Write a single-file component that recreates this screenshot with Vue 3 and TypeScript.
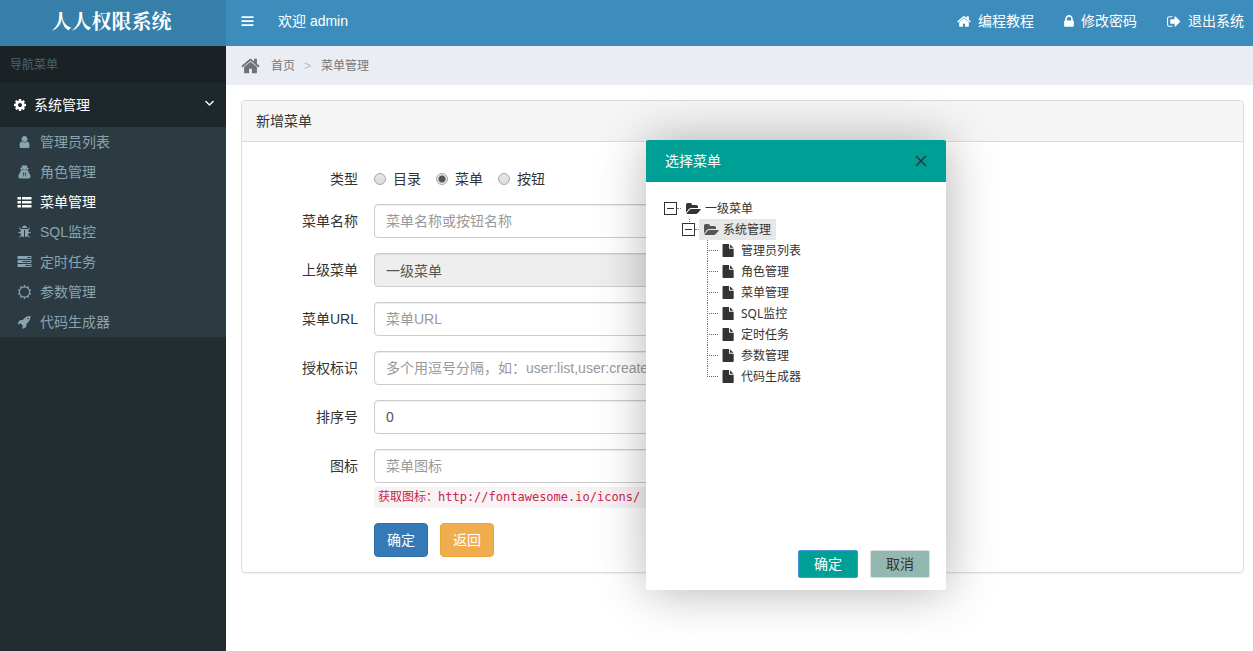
<script setup lang="ts">
import { ref } from 'vue'

interface Glyph {
  box: string
  d: string
}

const glyphs: Record<string, Glyph> = {
  bars: {
    box: '128 128 1536 1536',
    d: 'M128 1312h1536v224H128zM128 800h1536v224H128zM128 288h1536v224H128z',
  },
  home: {
    box: '64 0 1664 1792',
    d: 'M1472 992v480q0 26-19 45t-45 19h-384v-384h-256v384h-384q-26 0-45-19t-19-45v-480q0-1 .5-3t.5-3l575-474 575 474q1 2 1 6zm223-69l-62 74q-8 9-21 11h-3q-13 0-21-7l-692-577-692 577q-12 8-24 7-13-2-21-11l-62-74q-8-10-7-23.5t11-21.5l719-599q32-26 76-26t76 26l244 204v-195q0-14 9-23t23-9h192q14 0 23 9t9 23v408l219 182q10 8 11 21.5t-7 23.5z',
  },
  lock: {
    box: '320 0 1152 1792',
    d: 'M640 768h512v-192q0-106-75-181t-181-75-181 75-75 181v192zm832 96v576q0 40-28 68t-68 28h-960q-40 0-68-28t-28-68v-576q0-40 28-68t68-28h32v-192q0-184 132-316t316-132 316 132 132 316v192h32q40 0 68 28t28 68z',
  },
  signOut: {
    box: '64 0 1664 1792',
    d: 'M704 1440q0 4 1 20t.5 26.5-3 23.5-10 19.5-20.5 6.5h-320q-119 0-203.5-84.5t-84.5-203.5v-704q0-119 84.5-203.5t203.5-84.5h320q13 0 22.5 9.5t9.5 22.5q0 4 1 20t.5 26.5-3 23.5-10 19.5-20.5 6.5h-320q-66 0-113 47t-47 113v704q0 66 47 113t113 47h312l11.5 1 11.5 3 8 5.5 7 9 2 13.5zm928-544q0 26-19 45l-544 544q-19 19-45 19t-45-19-19-45v-288h-448q-26 0-45-19t-19-45v-384q0-26 19-45t45-19h448v-288q0-26 19-45t45-19 45 19l544 544q19 19 19 45z',
  },
  cog: {
    box: '128 128 1536 1536',
    d: 'M1152 896q0-106-75-181t-181-75-181 75-75 181 75 181 181 75 181-75 75-181zm512-109v222q0 12-8 23t-20 13l-185 28q-19 54-39 91 35 50 107 138 10 12 10 25t-9 23q-27 37-99 108t-94 71q-12 0-26-9l-138-108q-44 23-91 38-16 136-29 186-7 28-36 28h-222q-14 0-24.5-8.5t-11.5-21.5l-28-184q-49-16-90-37l-141 107q-10 9-25 9-14 0-25-11-126-114-165-168-7-10-7-23 0-12 8-23 15-21 51-66.5t54-70.5q-27-50-41-99l-183-27q-13-2-21-12.5t-8-23.5v-222q0-12 8-23t19-13l186-28q14-46 39-92-40-57-107-138-10-12-10-24 0-10 9-23 26-36 98.5-107.5t94.5-71.5q13 0 26 10l138 107q44-23 91-38 16-136 29-186 7-28 36-28h222q14 0 24.5 8.5t11.5 21.5l28 184q49 16 90 37l142-107q9-9 24-9 13 0 25 10 129 119 165 170 7 8 7 22 0 12-8 23-15 21-51 66.5t-54 70.5q26 50 41 98l183 28q13 2 21 12.5t8 23.5z',
  },
  angleDown: {
    box: '384 448 1024 1024',
    d: 'M1395 736q0 13-10 23l-466 466q-10 10-23 10t-23-10l-466-466q-10-10-10-23t10-23l70-70q10-10 23-10t23 10l373 373 373-373q10-10 23-10t23 10l70 70q10 10 10 23z',
  },
  user: {
    box: '0 0 1792 1792',
    d: 'M1536 1399q0 109-62.5 187t-150.5 78h-854q-88 0-150.5-78t-62.5-187q0-85 8.5-160.5t31.5-152 58.5-131 94-89 134.5-34.5q131 128 313 128t313-128q76 0 134.5 34.5t94 89 58.5 131 31.5 152 8.5 160.5zm-256-887q0 159-112.5 271.5t-271.5 112.5-271.5-112.5-112.5-271.5 112.5-271.5 271.5-112.5 271.5 112.5 112.5 271.5z',
  },
  secret: {
    box: '100 90 1592 1592',
    d: 'M640 140q60-50 130-20 126 50 252 0 70-30 120 20 60 90 90 260 160 40 160 90 0 40-110 70 10 130-60 230h200l-60 170q220 120 220 440 0 190-180 230H370q-180-40-180-230 0-320 220-440l-50-170h190q-70-100-60-230-100-30-100-70 0-50 160-90 30-170 90-260zM590 610q0 90 110 90 110 0 140-90h80q30 90 140 90 120 0 130-90zM700 900l100 560 60-370-60-110zM1090 900l-100 80-60 110 60 370z',
  },
  list: {
    box: '0 0 1792 1792',
    d: 'M0 1280h448v320H0zM576 1280h1216v320H576zM0 768h448v320H0zM576 768h1216v320H576zM0 256h448v320H0zM576 256h1216v320H576z',
  },
  bug: {
    box: '0 0 1792 1792',
    d: 'M1696 960q0 26-19 45t-45 19h-224q0 171-67 290l208 209q19 19 19 45t-19 45q-18 19-45 19t-45-19l-198-197q-5 5-15 13t-42 28.5-65 36.5-82 29-97 13v-896h-128v896q-51 0-101.5-13.5t-87-33-66-39-43.5-32.5l-15-14-183 207q-20 21-48 21-24 0-43-16-19-18-20.5-44.5t15.5-46.5l202-227q-58-114-58-274h-224q-26 0-45-19t-19-45 19-45 45-19h224v-294l-173-173q-19-19-19-45t19-45 45-19 45 19l173 173h844l173-173q19-19 45-19t45 19 19 45-19 45l-173 173v294h224q26 0 45 19t19 45zm-480-576h-640q0-133 93.5-226.5t226.5-93.5 226.5 93.5 93.5 226.5z',
  },
  tasks: {
    box: '0 0 1792 1792',
    d: 'M1024 1408h640v-128h-640v128zm-384-512h1024v-128h-1024v128zm640-512h384v-128h-384v128zm512 832v256q0 26-19 45t-45 19h-1664q-26 0-45-19t-19-45v-256q0-26 19-45t45-19h1664q26 0 45 19t19 45zm0-512v256q0 26-19 45t-45 19h-1664q-26 0-45-19t-19-45v-256q0-26 19-45t45-19h1664q26 0 45 19t19 45zm0-512v256q0 26-19 45t-45 19h-1664q-26 0-45-19t-19-45v-256q0-26 19-45t45-19h1664q26 0 45 19t19 45z',
  },
  sun: {
    box: '0 0 1792 1792',
    d: 'M1472 896q0-117-45.5-223.5t-123-184-184-123-223.5-45.5-223.5 45.5-184 123-123 184-45.5 223.5 45.5 223.5 123 184 184 123 223.5 45.5 223.5-45.5 184-123 123-184 45.5-223.5zm276 277q-4 15-20 20l-292 96v306q0 16-13 26-15 10-29 4l-292-94-180 248q-10 13-26 13t-26-13l-180-248-292 94q-14 6-29-4-13-10-13-26v-306l-292-96q-16-5-20-20-5-17 4-29l180-248-180-248q-9-13-4-29 4-15 20-20l292-96v-306q0-16 13-26 15-10 29-4l292 94 180-248q9-12 26-12t26 12l180 248 292-94q14-6 29 4 13 10 13 26v306l292 96q16 5 20 20 5 16-4 29l-180 248 180 248q9 12 4 29z',
  },
  rocket: {
    box: '0 0 1792 1792',
    d: 'M1440 448q0-40-28-68t-68-28-68 28-28 68 28 68 68 28 68-28 28-68zm224-288q0 249-75.5 430.5t-253.5 360.5q-81 80-195 176l-20 379q-2 16-16 26l-384 224q-7 4-16 4-12 0-23-9l-64-64q-13-14-8-32l85-276-281-281-276 85q-3 1-9 1-14 0-23-9l-64-64q-17-19-5-39l224-384q10-14 26-16l379-20q96-114 176-195 188-187 358-258t431-71q14 0 24 9.5t10 22.5z',
  },
  folder: {
    box: '0 0 1920 1792',
    d: 'M1879 952q0 31-31 66l-336 396q-43 51-120.5 86.5t-143.5 35.5h-1088q-34 0-60.5-13t-26.5-43q0-31 31-66l336-396q43-51 120.5-86.5t143.5-35.5h1088q34 0 60.5 13t26.5 43zm-343-344v160h-832q-94 0-197 47.5t-164 119.5l-337 396-5 6q0-4-.5-12.5t-.5-12.5v-960q0-92 66-158t158-66h320q92 0 158 66t66 158v32h544q92 0 158 66t66 158z',
  },
  file: {
    box: '0 0 1920 1792',
    d: 'M1024 512v-472q22 14 36 28l408 408q14 14 28 36h-472zm-128 32q0 40 28 68t68 28h544v1056q0 40-28 68t-68 28h-1344q-40 0-68-28t-28-68v-1600q0-40 28-68t68-28h800v544z',
  },
}

const links = [
  { icon: 'home', text: '编程教程' },
  { icon: 'lock', text: '修改密码' },
  { icon: 'signOut', text: '退出系统' },
]

const menu = [
  { icon: 'user', text: '管理员列表' },
  { icon: 'secret', text: '角色管理' },
  { icon: 'list', text: '菜单管理' },
  { icon: 'bug', text: 'SQL监控' },
  { icon: 'tasks', text: '定时任务' },
  { icon: 'sun', text: '参数管理' },
  { icon: 'rocket', text: '代码生成器' },
]
const active = ref('菜单管理')

const types = ['目录', '菜单', '按钮']
const type = ref('菜单')

const fields = ref([
  { id: 'name', label: '菜单名称', value: '', hint: '菜单名称或按钮名称', readonly: false },
  { id: 'parent', label: '上级菜单', value: '一级菜单', hint: '', readonly: true },
  { id: 'url', label: '菜单URL', value: '', hint: '菜单URL', readonly: false },
  { id: 'perms', label: '授权标识', value: '', hint: '多个用逗号分隔，如：user:list,user:create', readonly: false },
  { id: 'order', label: '排序号', value: '0', hint: '', readonly: false },
  { id: 'icon', label: '图标', value: '', hint: '菜单图标', readonly: false },
])

const open = ref(true)
</script>

<template>
  <div class="app">
    <header class="top">
      <a class="logo" href="#">人人权限系统</a>
      <nav class="bar">
        <button class="burger" type="button" aria-label="切换导航">
          <svg class="icon-bars" :viewBox="glyphs.bars.box"><path :d="glyphs.bars.d" /></svg>
        </button>
        <span class="welcome">欢迎 admin</span>
        <div class="links">
          <a v-for="l in links" :key="l.text" href="#" class="link">
            <svg class="icon-link" :class="{ narrow: l.icon === 'lock' }" :viewBox="glyphs[l.icon].box">
              <path :d="glyphs[l.icon].d" />
            </svg>
            <span>{{ l.text }}</span>
          </a>
        </div>
      </nav>
    </header>

    <div class="main">
      <aside class="side">
        <div class="side-title">导航菜单</div>
        <button class="group" type="button">
          <svg class="icon-cog" :viewBox="glyphs.cog.box"><path :d="glyphs.cog.d" /></svg>
          <span class="group-text">系统管理</span>
          <svg class="icon-angle" :viewBox="glyphs.angleDown.box"><path :d="glyphs.angleDown.d" /></svg>
        </button>
        <ul class="sub">
          <li v-for="m in menu" :key="m.text">
            <a href="#" class="sub-item" :class="{ active: m.text === active }" @click.prevent="active = m.text">
              <svg class="icon-menu" :viewBox="glyphs[m.icon].box">
                <path :d="glyphs[m.icon].d" fill-rule="evenodd" />
              </svg>
              <span>{{ m.text }}</span>
            </a>
          </li>
        </ul>
      </aside>

      <section class="content">
        <nav class="crumbs">
          <svg class="icon-home" :viewBox="glyphs.home.box"><path :d="glyphs.home.d" /></svg>
          <a href="#" class="crumb">首页</a>
          <span class="sep">&gt;</span>
          <span>菜单管理</span>
        </nav>

        <div class="panel">
          <h1 class="panel-title">新增菜单</h1>
          <form class="form" @submit.prevent>
            <div class="row types" role="radiogroup" aria-labelledby="type-label">
              <span id="type-label" class="label">类型</span>
              <div class="radios">
                <label v-for="t in types" :key="t" class="radio">
                  <input v-model="type" type="radio" name="type" :value="t" />
                  <span>{{ t }}</span>
                </label>
              </div>
            </div>
            <div v-for="f in fields" :key="f.id" class="row">
              <label class="label" :for="f.id">{{ f.label }}</label>
              <input
                :id="f.id"
                v-model="f.value"
                class="field"
                type="text"
                :placeholder="f.hint"
                :readonly="f.readonly"
              />
            </div>
            <code class="hint">获取图标：http://fontawesome.io/icons/</code>
            <div class="actions">
              <button class="btn primary" type="submit">确定</button>
              <button class="btn warning" type="button">返回</button>
            </div>
          </form>
        </div>
      </section>
    </div>

    <div v-if="open" class="modal" role="dialog" aria-labelledby="modal-title">
      <div class="modal-head">
        <span id="modal-title">选择菜单</span>
        <button class="close" type="button" aria-label="关闭" @click="open = false">
          <svg class="icon-close" viewBox="0 0 12 12"><path d="M1 1L11 11M11 1L1 11" /></svg>
        </button>
      </div>
      <ul class="tree">
        <li>
          <div class="node">
            <button class="toggle" type="button" aria-label="折叠一级菜单"></button>
            <span class="stub"></span>
            <span class="node-label">
              <svg class="icon-tree" :viewBox="glyphs.folder.box"><path :d="glyphs.folder.d" /></svg>
              <span>一级菜单</span>
            </span>
          </div>
          <ul class="branch">
            <li>
              <div class="node child">
                <button class="toggle" type="button" aria-label="折叠系统管理"></button>
                <span class="stub"></span>
                <span class="node-label selected">
                  <svg class="icon-tree" :viewBox="glyphs.folder.box"><path :d="glyphs.folder.d" /></svg>
                  <span>系统管理</span>
                </span>
              </div>
              <ul class="branch">
                <li v-for="m in menu" :key="m.text" class="node leaf">
                  <span class="elbow"></span>
                  <span class="node-label">
                    <svg class="icon-tree file" :viewBox="glyphs.file.box"><path :d="glyphs.file.d" /></svg>
                    <span>{{ m.text }}</span>
                  </span>
                </li>
              </ul>
            </li>
          </ul>
        </li>
      </ul>
      <div class="modal-foot">
        <button class="mbtn ok" type="button">确定</button>
        <button class="mbtn cancel" type="button" @click="open = false">取消</button>
      </div>
    </div>
  </div>
</template>

<style>
body {
  margin: 0;
  background: #fff;
}
</style>

<style scoped>
.app,
.app * {
  box-sizing: border-box;
}
.app {
  display: flex;
  flex-direction: column;
  min-height: 100vh;
  font: 14px/20px "Liberation Sans", "Noto Sans CJK SC", sans-serif;
  color: #333;
}
.app button,
.app input {
  font: inherit;
  margin: 0;
}
.app button {
  cursor: pointer;
}
ul {
  list-style: none;
  margin: 0;
  padding: 0;
}
a {
  color: inherit;
  text-decoration: none;
}
svg {
  fill: currentColor;
  flex: none;
  display: block;
}

.top {
  display: flex;
  height: 46px;
  color: #fff;
}
.logo {
  flex: none;
  width: 226px;
  padding-right: 3px;
  background: #367fa9;
  font-family: "Liberation Serif", "Noto Serif CJK SC", "Noto Sans CJK SC", serif;
  font-size: 20px;
  font-weight: 700;
  line-height: 44px;
  text-align: center;
}
.bar {
  flex: 1;
  display: flex;
  align-items: center;
  padding: 0 9px 4px 15px;
  background: #3c8dbc;
}
.burger {
  padding: 0;
  border: 0;
  background: none;
  color: inherit;
}
.icon-bars {
  width: 13px;
  height: 12px;
}
.welcome {
  margin-left: 24px;
}
.links {
  display: flex;
  gap: 30px;
  margin-left: auto;
}
.link {
  display: flex;
  align-items: center;
  gap: 7px;
}
.icon-link {
  width: 14px;
  height: 15px;
}
.icon-link.narrow {
  width: 10px;
}

.main {
  flex: 1;
  display: flex;
}
.side {
  flex: none;
  width: 226px;
  background: #222d32;
}
.side-title {
  height: 37px;
  padding-left: 10px;
  background: #1a2226;
  color: #4b646f;
  font-size: 12px;
  line-height: 38px;
}
.group {
  display: flex;
  align-items: center;
  width: 100%;
  height: 44px;
  padding: 0 12px 0 14px;
  border: 0;
  background: #1e282c;
  color: #fff;
  text-align: left;
}
.group-text {
  flex: 1;
  margin-left: 8px;
}
.icon-cog {
  width: 12px;
  height: 12px;
}
.icon-angle {
  width: 9px;
  height: 9px;
  margin-bottom: 4px;
}
.sub {
  background: #2c3b41;
}
.sub-item {
  display: flex;
  align-items: center;
  gap: 8px;
  height: 30px;
  padding-left: 17px;
  color: #8aa4af;
}
.sub-item.active {
  color: #fff;
}
.icon-menu {
  width: 15px;
  height: 14px;
}

.content {
  flex: 1;
  min-width: 0;
}
.crumbs {
  display: flex;
  align-items: center;
  height: 39px;
  padding: 1px 0 0 15px;
  background: #eaedf3;
  color: #777;
  font-size: 12px;
}
.icon-home {
  width: 19px;
  height: 20px;
  color: #6f7377;
}
.crumb {
  margin-left: 11px;
}
.sep {
  margin: 0 10px 0 9px;
  color: #bbb;
}

.panel {
  margin: 15px 9px 0 15px;
  border: 1px solid #ddd;
  border-radius: 4px;
  box-shadow: 0 1px 1px rgba(0, 0, 0, 0.05);
}
.panel-title {
  margin: 0;
  padding: 10px 14px;
  border-bottom: 1px solid #ddd;
  border-radius: 3px 3px 0 0;
  background: #f5f5f5;
  font-size: 14px;
  font-weight: 400;
}
.form {
  max-width: 700px;
  padding: 20px 15px 15px;
}
.row {
  display: flex;
  align-items: center;
  gap: 16px;
  margin-bottom: 15px;
}
.row.types {
  padding-top: 7px;
}
.label {
  flex: none;
  width: 101px;
  text-align: right;
}
.radios {
  display: flex;
  gap: 15px;
}
.radio {
  display: flex;
  align-items: center;
  gap: 7px;
}
.radio input {
  appearance: none;
  width: 12px;
  height: 12px;
  border: 1px solid #a8a8a8;
  border-radius: 50%;
  background: linear-gradient(#e6e6e6, #dcdcdc);
}
.radio input:checked {
  background: radial-gradient(circle, #555 0 3px, #e2e2e2 4px);
}
.field {
  flex: 1;
  min-width: 0;
  height: 34px;
  padding: 6px 11px;
  border: 1px solid #ccc;
  border-radius: 4px;
  background: #fff;
  box-shadow: inset 0 1px 1px rgba(0, 0, 0, 0.075);
  color: #555;
  outline: none;
}
.field::placeholder {
  color: #999;
  opacity: 1;
}
.field:read-only {
  background: #eee;
}
.hint {
  display: block;
  margin: -11px 0 15px 117px;
  padding: 0 4px;
  border-radius: 4px;
  background: #f9f2f4;
  color: #c7254e;
  font: 12px/21px "DejaVu Sans Mono", "Noto Sans CJK SC", monospace;
}
.actions {
  display: flex;
  gap: 12px;
  margin-left: 117px;
}
.btn {
  width: 54px;
  height: 34px;
  padding: 0;
  border: 1px solid;
  border-radius: 4px;
  color: #fff;
}
.btn.primary {
  background: #337ab7;
  border-color: #2e6da4;
}
.btn.warning {
  background: #f0ad4e;
  border-color: #eea236;
}

.modal {
  position: absolute;
  left: 646px;
  top: 140px;
  display: flex;
  flex-direction: column;
  width: 300px;
  height: 450px;
  border-radius: 2px;
  background: #fff;
  box-shadow: 1px 1px 50px rgba(0, 0, 0, 0.3);
}
.modal-head {
  display: flex;
  align-items: center;
  justify-content: space-between;
  height: 42px;
  padding: 0 19px;
  border-radius: 2px 2px 0 0;
  background: #009f95;
  color: #fff;
}
.close {
  padding: 0;
  border: 0;
  background: none;
}
.icon-close {
  width: 12px;
  height: 12px;
  fill: none;
  stroke: #2d3037;
  stroke-width: 1.4;
}
.tree {
  flex: 1;
  padding: 16px 18px;
  font: 12px/21px "Noto Sans", "Noto Sans CJK SC", sans-serif;
}
.branch {
  padding-left: 18px;
}
.node {
  display: flex;
  align-items: center;
  height: 21px;
}
.node.child {
  background: repeating-linear-gradient(#777 0 1px, transparent 1px 2px) 7px 0 / 1px 4px no-repeat;
}
.toggle {
  display: flex;
  align-items: center;
  justify-content: center;
  flex: none;
  width: 13px;
  height: 13px;
  margin-left: 1px;
  padding: 0;
  border: 1px solid #333;
  background: #fff;
}
.toggle::before {
  content: "";
  width: 7px;
  height: 1px;
  background: #333;
}
.stub {
  width: 4px;
  border-top: 1px dotted #777;
}
.node-label {
  display: flex;
  align-items: center;
  gap: 4px;
  padding: 0 5px;
}
.node-label.selected {
  background: #e7e7e7;
}
.selected .icon-tree {
  color: #555;
}
.icon-tree {
  width: 15px;
  height: 14px;
}
.leaf .node-label {
  padding: 0 4px;
}
.icon-tree.file {
  height: 13px;
}
.elbow {
  align-self: flex-start;
  width: 11px;
  height: 11px;
  margin-left: 7px;
  border-bottom: 1px dotted #666;
}
.leaf {
  background: repeating-linear-gradient(#777 0 1px, transparent 1px 2px) 7px 0 / 1px 100% no-repeat;
}
.leaf:last-child {
  background-size: 1px 11px;
}
.modal-foot {
  display: flex;
  justify-content: flex-end;
  gap: 12px;
  padding: 0 16px 12px;
}
.mbtn {
  width: 60px;
  height: 28px;
  padding: 0;
  border: 1px solid;
  border-radius: 2px;
}
.mbtn.ok {
  border-color: #4898d5;
  background: #009f95;
  color: #fff;
}
.mbtn.cancel {
  border-color: #dedede;
  background: #92b8b1;
  color: #333;
}
</style>
